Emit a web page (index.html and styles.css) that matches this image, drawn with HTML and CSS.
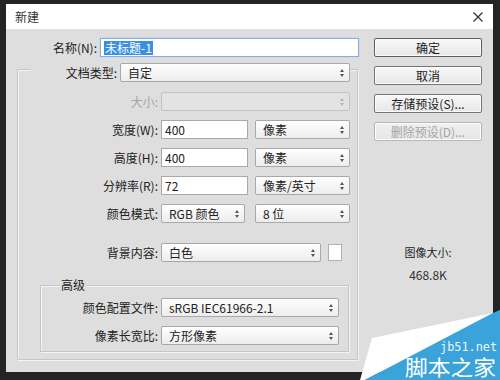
FILE: index.html
```html
<!DOCTYPE html>
<html lang="zh-CN">
<head>
<meta charset="utf-8">
<title>新建</title>
<link rel="stylesheet" href="styles.css">
</head>
<body>
<div class="window">
  <div class="titlebar">
    <span class="title">新建</span>
    <svg class="close" viewBox="0 0 10 10" width="10" height="10"><path d="M0.5 0.5 L9.5 9.5 M9.5 0.5 L0.5 9.5" stroke="#333" stroke-width="1.2" fill="none"/></svg>
  </div>
  <div class="body">
    <div class="main">
      <div class="row name-row">
        <span class="lbl lw80">名称(N):</span>
        <div class="ctl input focus w259"><span class="sel">未标题-1</span></div>
      </div>
      <fieldset class="group">
        <legend class="doc-legend">
          <span class="lbl lw87">文档类型:</span>
          <div class="ctl select w230"><span>自定</span><span class="arr"></span></div>
        </legend>
        <div class="row first">
          <span class="lbl lw140 dis">大小:</span>
          <div class="ctl select dis w189"><span></span><span class="arr"></span></div>
        </div>
        <div class="row">
          <span class="lbl lw140">宽度(W):</span>
          <div class="ctl input w87">400</div>
          <div class="ctl select w95 ml7"><span>像素</span><span class="arr"></span></div>
        </div>
        <div class="row">
          <span class="lbl lw140">高度(H):</span>
          <div class="ctl input w87">400</div>
          <div class="ctl select w95 ml7"><span>像素</span><span class="arr"></span></div>
        </div>
        <div class="row">
          <span class="lbl lw140">分辨率(R):</span>
          <div class="ctl input w87">72</div>
          <div class="ctl select w95 ml7"><span>像素/英寸</span><span class="arr"></span></div>
        </div>
        <div class="row">
          <span class="lbl lw140">颜色模式:</span>
          <div class="ctl select w84"><span>RGB 颜色</span><span class="arr"></span></div>
          <div class="ctl select w95 ml10"><span>8 位</span><span class="arr"></span></div>
        </div>
        <div class="row bg-row">
          <span class="lbl lw140">背景内容:</span>
          <div class="ctl select w160"><span>白色</span><span class="arr"></span></div>
          <div class="swatch"></div>
        </div>
        <fieldset class="adv">
          <legend class="adv-legend">高级</legend>
          <div class="row first">
            <span class="lbl lw117">颜色配置文件:</span>
            <div class="ctl select w178"><span>sRGB IEC61966-2.1</span><span class="arr"></span></div>
          </div>
          <div class="row">
            <span class="lbl lw117">像素长宽比:</span>
            <div class="ctl select w178"><span>方形像素</span><span class="arr"></span></div>
          </div>
        </fieldset>
      </fieldset>
    </div>
    <div class="side">
      <div class="btn default">确定</div>
      <div class="btn">取消</div>
      <div class="btn">存储预设(S)...</div>
      <div class="btn dis">删除预设(D)...</div>
      <div class="imgsize">
        <div class="is-label">图像大小:</div>
        <div class="is-value">468.8K</div>
      </div>
    </div>
  </div>
</div>
<svg class="watermark" viewBox="0 0 140 70" width="140" height="70">
  <polygon points="12,28 133,3 5,70 0,70" fill="#ffffff"/>
  <polygon points="5,70 133,3 140,0 140,70" fill="#3aa3d9"/>
  <text x="80" y="41" class="wm-en" textLength="57" lengthAdjust="spacingAndGlyphs">jb51.net</text>
  <text x="45" y="65" class="wm-cn" textLength="91" lengthAdjust="spacingAndGlyphs">脚本之家</text>
</svg>
</body>
</html>
```

FILE: styles.css
```css
* { box-sizing: border-box; }
html, body { margin: 0; padding: 0; }
body {
  width: 500px;
  height: 380px;
  overflow: hidden;
  position: relative;
  background: #242424;
  font-family: "Noto Sans CJK SC", "Microsoft YaHei", sans-serif;
  font-size: 12px;
  color: #222;
}
.window {
  margin: 4px 7px 0 6px;
  width: 487px;
  height: 368px;
  background: #dedede;
}
.titlebar {
  height: 25px;
  background: #fff;
  display: flex;
  align-items: center;
  justify-content: space-between;
  padding: 0 10px 0 9px;
}
.title { font-size: 12px; color: #333; line-height: 16px; }
.close { display: block; }
.body {
  display: flex;
  gap: 15px;
  padding: 9px 11px 0 11px;
}
.main { width: 342px; }
.side { width: 108px; display: flex; flex-direction: column; }

.row { display: flex; align-items: center; margin-top: 9px; }
.row.first { margin-top: 0; }
.name-row { margin-top: 0; }
.bg-row { margin-top: 20px; }

.lbl { line-height: 19px; text-align: right; margin-right: 3px; white-space: nowrap; flex: none; }
.lbl.dis { color: #a4a4a4; }
.lw80 { width: 80px; }
.lw87 { width: 87px; }
.lw117 { width: 117px; }
.lw140 { width: 140px; }

.ctl {
  height: 19px;
  border: 1px solid #a8a8a8;
  background: #fff;
  display: flex;
  align-items: center;
  line-height: 17px;
  flex: none;
  white-space: nowrap;
}
.input { padding-left: 3px; }
.input.focus { border-color: #86aede; box-shadow: 0 0 2px #b6d3f2; }
.sel { background: #3b8fe3; color: #fff; line-height: 14px; padding: 0 1px; }
.select {
  justify-content: space-between;
  padding: 0 4px 0 7px;
  border-radius: 2px;
  background: linear-gradient(#fefefe, #ededed);
}
.select.dis { background: #e3e3e3; border-color: #c3c3c3; }
.arr { display: flex; flex-direction: column; gap: 2px; width: 5px; }
.arr::before, .arr::after { content: ""; display: block; width: 0; height: 0; border-left: 2.5px solid transparent; border-right: 2.5px solid transparent; }
.arr::before { border-bottom: 3px solid #555; }
.arr::after { border-top: 3px solid #555; }
.select.dis .arr::before { border-bottom-color: #b4b4b4; }
.select.dis .arr::after { border-top-color: #b4b4b4; }

.w84 { width: 84px; }
.w87 { width: 87px; }
.w95 { width: 95px; }
.w160 { width: 160px; }
.w178 { width: 178px; }
.w189 { width: 189px; }
.w230 { width: 230px; }
.w259 { width: 259px; }
.ml7 { margin-left: 7px; }
.ml10 { margin-left: 10px; }

.swatch { width: 14px; height: 17px; background: #fff; border: 1px solid #b0b0b0; margin-left: 7px; }

.group {
  margin: 0;
  width: 341px;
  min-inline-size: 0;
  padding: 10px 0 7px 0;
  border: 1px solid #c6c6c6;
  box-shadow: inset 1px 1px 0 #f4f4f4, 1px 1px 0 #f4f4f4;
}
.doc-legend {
  display: flex;
  align-items: center;
  padding: 6px 0 0 0;
  margin-left: 12px;
  background: #dedede;
}
.adv {
  margin: 15px 0 0 22px;
  width: 309px;
  min-inline-size: 0;
  padding: 5px 0 6px 0;
  border: 1px solid #c6c6c6;
  box-shadow: inset 1px 1px 0 #f4f4f4, 1px 1px 0 #f4f4f4;
}
.adv-legend {
  margin-left: 19px;
  padding: 0 1px;
  line-height: 16px;
  background: #dedede;
}

.btn {
  height: 19px;
  border: 1px solid #757575;
  border-radius: 2px;
  background: linear-gradient(#f8f8f8, #e7e7e7);
  box-shadow: inset 0 0 0 1px #fbfbfb;
  display: flex;
  align-items: center;
  justify-content: center;
  margin-bottom: 9px;
  line-height: 17px;
  white-space: nowrap;
}
.btn.default { border-color: #5f5f5f; }
.btn.dis { color: #a5a5a5; border-color: #b8b8b8; background: linear-gradient(#f0f0f0, #e6e6e6); }

.imgsize { margin-top: 94px; text-align: center; }
.is-label { font-size: 11px; line-height: 16px; }
.is-value { font-size: 12px; line-height: 16px; margin-top: 7px; color: #333; }

.watermark { position: absolute; left: 360px; top: 310px; display: block; }
.wm-en { font-family: "DejaVu Sans Mono", monospace; font-size: 12px; fill: #eaf6fc; }
.wm-cn { font-family: "Noto Sans CJK SC", sans-serif; font-size: 21px; fill: #ffffff; }
```
